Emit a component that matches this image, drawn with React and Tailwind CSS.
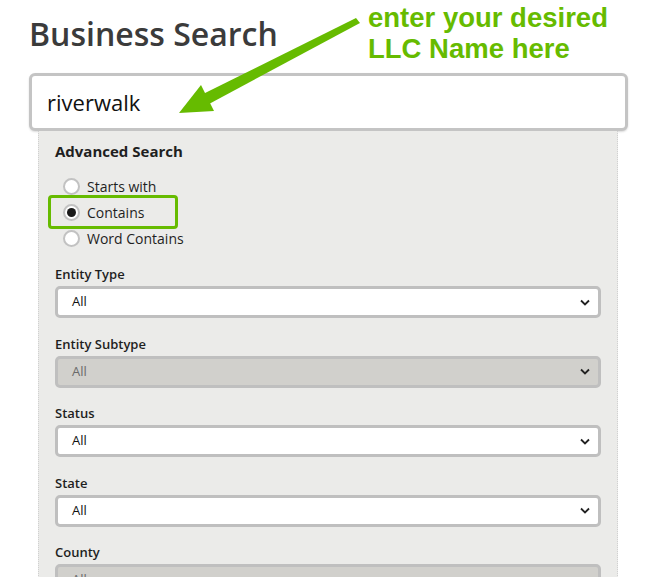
import { useState } from 'react';

const FIELDS = [
  { label: 'Entity Type', disabled: false },
  { label: 'Entity Subtype', disabled: true },
  { label: 'Status', disabled: false },
  { label: 'State', disabled: false },
  { label: 'County', disabled: true },
];

const MODES = ['Starts with', 'Contains', 'Word Contains'];

function Radio({ checked }) {
  return (
    <span className="flex h-[17px] w-[17px] items-center justify-center rounded-full border-2 border-[#c2c2c2] bg-white">
      {checked && <span className="h-[9px] w-[9px] rounded-full bg-[#1a1a1a]" />}
    </span>
  );
}

function Chevron() {
  return (
    <svg className="h-[7px] w-[10px]" viewBox="0 0 10 7" fill="none" stroke="#222" strokeWidth="1.8">
      <path d="M1 1.5l4 4 4-4" />
    </svg>
  );
}

function SelectField({ label, disabled }) {
  return (
    <div className="mb-[16.5px]">
      <div className="h-[18px] text-[13px] leading-[18px] font-semibold text-[#1f1f1f]">{label}</div>
      <div
        className={
          'mt-[3px] flex h-[32px] items-center justify-between rounded-[5px] border-[3px] border-[#bfbfbf] pl-[14px] pr-[8px] text-[13px] ' +
          (disabled ? 'bg-[#d1d0cc] text-[#6a6a6a]' : 'bg-white text-[#111]')
        }
      >
        <span>All</span>
        <Chevron />
      </div>
    </div>
  );
}

export default function App() {
  const [mode] = useState('Contains');

  return (
    <div className="relative h-[577px] w-[667px] overflow-hidden bg-white font-['Open_Sans',sans-serif]">
      <div className="pl-[29px] pt-[14px]">
        <h1 className="h-[40px] text-[32px] leading-[40px] font-semibold text-[#3b3b3b]">Business Search</h1>

        <div className="mt-[19px] w-[599px]">
          <div className="flex h-[58px] items-center rounded-[6px] border-[3px] border-[#c4c4c4] bg-white pl-[15px] text-[22px] text-[#111] shadow-[0_1px_2px_rgba(0,0,0,0.15)]">
            riverwalk
          </div>

          <div className="ml-[9px] mr-[10px] border-x border-dotted border-[#d0d0d0] bg-[#ebebe9] pl-[16px] pr-[16px] pt-[10px]">
            <div className="h-[20px] text-[15px] leading-[20px] font-bold text-[#1f1f1f]">Advanced Search</div>

            <div className="relative mt-[12px]">
              {MODES.map((m) => (
                <div key={m} className="flex h-[26px] items-center gap-[7px] pl-[8px] text-[14px] font-medium text-[#1f1f1f]">
                  <Radio checked={m === mode} />
                  <span>{m}</span>
                </div>
              ))}
              <div className="pointer-events-none absolute left-[-7px] top-[22px] h-[34px] w-[130px] rounded-[4px] border-[3px] border-[#66bb00]" />
            </div>

            <div className="mt-[14px]">
              {FIELDS.map((f) => (
                <SelectField key={f.label} label={f.label} disabled={f.disabled} />
              ))}
            </div>
          </div>
        </div>
      </div>

      <div className="absolute left-[368px] top-[2px] font-['Liberation_Sans',Arial,sans-serif] text-[27.5px] leading-[31px] font-bold text-[#66bb00]">
        <div>enter your desired</div>
        <div>LLC Name here</div>
      </div>

      <svg className="pointer-events-none absolute left-0 top-0" width="667" height="577" viewBox="0 0 667 577">
        <polygon points="356,18 360,23 209,104 201,95" fill="#66bb00" />
        <polygon points="179,113 201,85 214,111" fill="#66bb00" />
      </svg>
    </div>
  );
}
